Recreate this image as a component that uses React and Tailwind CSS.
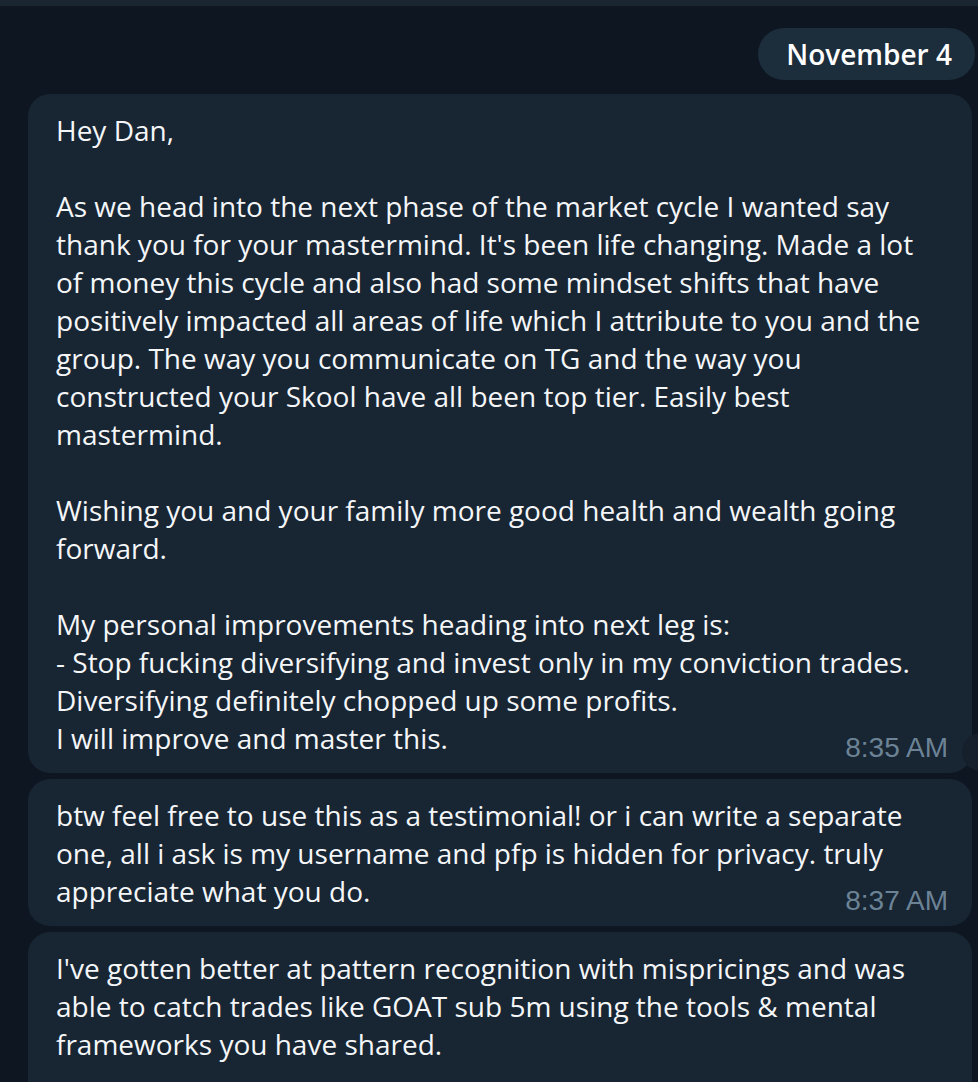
const bubbles = [
  {
    lines: [
      "Hey Dan,",
      "",
      "As we head into the next phase of the market cycle I wanted say",
      "thank you for your mastermind. It's been life changing. Made a lot",
      "of money this cycle and also had some mindset shifts that have",
      "positively impacted all areas of life which I attribute to you and the",
      "group. The way you communicate on TG and the way you",
      "constructed your Skool have all been top tier. Easily best",
      "mastermind.",
      "",
      "Wishing you and your family more good health and wealth going",
      "forward.",
      "",
      "My personal improvements heading into next leg is:",
      "- Stop fucking diversifying and invest only in my conviction trades.",
      "Diversifying definitely chopped up some profits.",
      "I will improve and master this.",
    ],
    time: "8:35 AM",
    share: true,
  },
  {
    lines: [
      "btw feel free to use this as a testimonial! or i can write a separate",
      "one, all i ask is my username and pfp is hidden for privacy. truly",
      "appreciate what you do.",
    ],
    time: "8:37 AM",
  },
  {
    lines: [
      "I've gotten better at pattern recognition with mispricings and was",
      "able to catch trades like GOAT sub 5m using the tools & mental",
      "frameworks you have shared.",
      "",
    ],
  },
];

const Bubble = ({ lines, time, share }) => (
  <div className="relative">
    <div className="w-[944px] rounded-[22px] bg-[#182533] pl-[28px] pr-[20px] pt-[17px] pb-[16px] text-[28px] leading-[38px] text-[#f4f6f8]">
      {lines.map((line, i) => (
        <div key={i} className="whitespace-nowrap h-[38px]">
          {line}
        </div>
      ))}
    </div>
    {time && (
      <span
        className="absolute right-[30px] bottom-[10px] text-[28px] leading-[30px] text-[#6c8396]"
        style={{ fontFamily: '"Liberation Sans", Arial, sans-serif' }}
      >
        {time}
      </span>
    )}
    {share && (
      <div className="absolute left-[934px] bottom-[2px] w-[38px] h-[38px] rounded-full bg-[#15202c]" />
    )}
  </div>
);

export default function App() {
  return (
    <div
      className="h-[1082px] w-[978px] overflow-hidden bg-[#0e1621]"
      style={{ fontFamily: '"Open Sans", "Noto Sans", sans-serif' }}
    >
      <div className="h-[6px] bg-[#1a2532]" />
      <div className="flex justify-end pt-[22px] pr-[3px]">
        <div className="h-[52px] rounded-full bg-[#1c2d3c] pl-[28px] pr-[23px] flex items-center text-[28px] font-semibold text-white">
          November 4
        </div>
      </div>
      <div className="flex flex-col gap-[6px] pl-[28px] pt-[14px]">
        {bubbles.map((b, i) => (
          <Bubble key={i} {...b} />
        ))}
      </div>
    </div>
  );
}
